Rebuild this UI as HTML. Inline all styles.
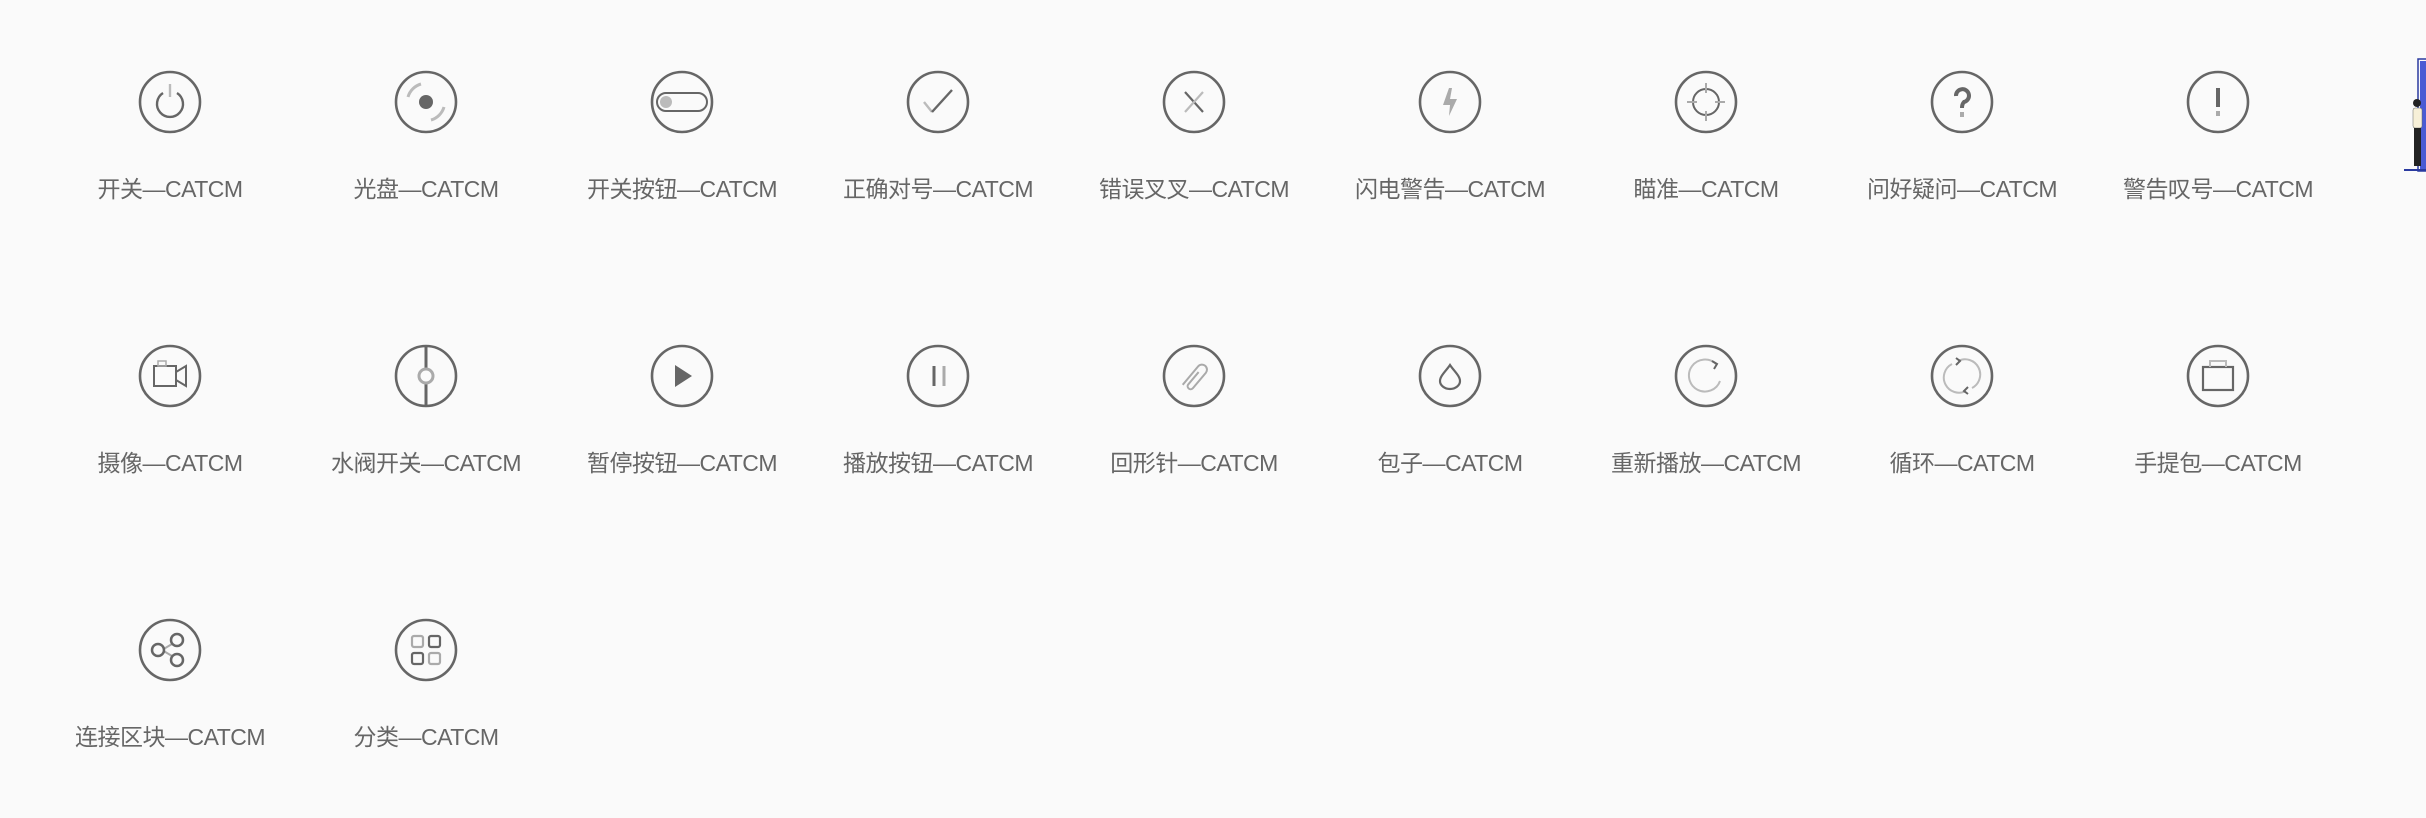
<!DOCTYPE html>
<html><head><meta charset="utf-8"><style>
html,body{margin:0;padding:0;background:#fafafa;width:2426px;height:818px;overflow:hidden;position:relative}
.i{position:absolute;width:64px;height:64px}
.t{position:absolute;width:256px;text-align:center;font-family:"Liberation Sans","Noto Sans CJK SC",sans-serif;font-size:23px;color:#666;line-height:30px;letter-spacing:-0.5px}
svg{overflow:visible}
</style></head><body>
<svg width="0" height="0" style="position:absolute"><defs><circle id="c" r="30" fill="none" stroke="#666" stroke-width="2.6"/></defs></svg>
<!-- row 1 -->
<svg class="i" style="left:138px;top:70px" viewBox="-32 -32 64 64"><use href="#c"/><path d="M-7-9A13 13 0 1 0 7-9" fill="none" stroke="#666" stroke-width="2.4"/><line x1="0" y1="-18" x2="0" y2="-5" stroke="#bbb" stroke-width="2.4"/></svg>
<div class="t" style="left:42px;top:174px">开关—CATCM</div>
<svg class="i" style="left:394px;top:70px" viewBox="-32 -32 64 64"><use href="#c"/><circle r="7" fill="#666"/><path d="M-18-5A19 19 0 0 1-5-18M18 5A19 19 0 0 1 5 18" fill="none" stroke="#bbb" stroke-width="3"/></svg>
<div class="t" style="left:298px;top:174px">光盘—CATCM</div>
<svg class="i" style="left:650px;top:70px" viewBox="-32 -32 64 64"><use href="#c"/><rect x="-25" y="-9" width="50" height="18" rx="9" fill="none" stroke="#666" stroke-width="2"/><circle cx="-16" r="6" fill="#bbb"/></svg>
<div class="t" style="left:554px;top:174px">开关按钮—CATCM</div>
<svg class="i" style="left:906px;top:70px" viewBox="-32 -32 64 64"><use href="#c"/><path d="M-14 0L-6 10" stroke="#bbb" stroke-width="2.4" fill="none"/><path d="M-6 10L14-12" stroke="#666" stroke-width="2.4" fill="none"/></svg>
<div class="t" style="left:810px;top:174px">正确对号—CATCM</div>
<svg class="i" style="left:1162px;top:70px" viewBox="-32 -32 64 64"><use href="#c"/><path d="M-9-10L9 10" stroke="#666" stroke-width="2.2"/><path d="M9-10L-9 10" stroke="#bbb" stroke-width="2.2"/></svg>
<div class="t" style="left:1066px;top:174px">错误叉叉—CATCM</div>
<svg class="i" style="left:1418px;top:70px" viewBox="-32 -32 64 64"><use href="#c"/><path d="M-1-14L-7 3H0L-1 14L7-3H0L2-14Z" fill="#aaa"/></svg>
<div class="t" style="left:1322px;top:174px">闪电警告—CATCM</div>
<svg class="i" style="left:1674px;top:70px" viewBox="-32 -32 64 64"><use href="#c"/><circle r="13" fill="none" stroke="#666" stroke-width="2"/><path d="M0-19V-9M0 9V19M-19 0H-9M9 0H19" stroke="#aaa" stroke-width="2"/></svg>
<div class="t" style="left:1578px;top:174px">瞄准—CATCM</div>
<svg class="i" style="left:1930px;top:70px" viewBox="-32 -32 64 64"><use href="#c"/><path d="M-6-6A6.5 6.5 0 1 1 2 0Q0 2 0 6" fill="none" stroke="#666" stroke-width="4"/><rect x="-2" y="10" width="4" height="5" fill="#aaa"/></svg>
<div class="t" style="left:1834px;top:174px">问好疑问—CATCM</div>
<svg class="i" style="left:2186px;top:70px" viewBox="-32 -32 64 64"><use href="#c"/><path d="M0-14V5" stroke="#666" stroke-width="4"/><rect x="-2" y="9" width="4" height="5" fill="#aaa"/></svg>
<div class="t" style="left:2090px;top:174px">警告叹号—CATCM</div>
<!-- row 2 -->
<svg class="i" style="left:138px;top:344px" viewBox="-32 -32 64 64"><use href="#c"/><rect x="-16" y="-10" width="22" height="20" fill="none" stroke="#666" stroke-width="2"/><path d="M6-4L16-10V10L6 4" fill="none" stroke="#666" stroke-width="2"/><rect x="-12" y="-15" width="8" height="5" fill="none" stroke="#aaa" stroke-width="1.5"/></svg>
<div class="t" style="left:42px;top:448px">摄像—CATCM</div>
<svg class="i" style="left:394px;top:344px" viewBox="-32 -32 64 64"><use href="#c"/><path d="M0-30V-7M0 7V30" stroke="#666" stroke-width="3"/><circle r="7" fill="none" stroke="#aaa" stroke-width="3"/></svg>
<div class="t" style="left:298px;top:448px">水阀开关—CATCM</div>
<svg class="i" style="left:650px;top:344px" viewBox="-32 -32 64 64"><use href="#c"/><path d="M-7-11L10 0L-7 11Z" fill="#666"/></svg>
<div class="t" style="left:554px;top:448px">暂停按钮—CATCM</div>
<svg class="i" style="left:906px;top:344px" viewBox="-32 -32 64 64"><use href="#c"/><path d="M-4-10V10" stroke="#666" stroke-width="3"/><path d="M6-10V10" stroke="#aaa" stroke-width="3"/></svg>
<div class="t" style="left:810px;top:448px">播放按钮—CATCM</div>
<svg class="i" style="left:1162px;top:344px" viewBox="-32 -32 64 64"><use href="#c"/><g transform="rotate(40)" fill="none" stroke="#aaa" stroke-width="2"><path d="M-3 14V-10A5 5 0 0 1 7-10V10A3 3 0 0 1 1 10V-6"/></g></svg>
<div class="t" style="left:1066px;top:448px">回形针—CATCM</div>
<svg class="i" style="left:1418px;top:344px" viewBox="-32 -32 64 64"><use href="#c"/><path d="M0-11C4-5 10 0 10 5A10 8 0 0 1-10 5C-10 0-4-5 0-11Z" fill="none" stroke="#666" stroke-width="2.2"/></svg>
<div class="t" style="left:1322px;top:448px">包子—CATCM</div>
<svg class="i" style="left:1674px;top:344px" viewBox="-32 -32 64 64"><use href="#c"/><path d="M10-12A16 16 0 1 0 14 5" fill="none" stroke="#bbb" stroke-width="2"/><path d="M6-15L11-12L8-7" fill="none" stroke="#666" stroke-width="2"/></svg>
<div class="t" style="left:1578px;top:448px">重新播放—CATCM</div>
<svg class="i" style="left:1930px;top:344px" viewBox="-32 -32 64 64"><use href="#c"/><path d="M-4-15A15 15 0 0 1 10 12M4 15A15 15 0 0 1-10-12" fill="none" stroke="#bbb" stroke-width="2"/><path d="M-6-18L-2-15L-6-11M6 18L2 15L6 11" fill="none" stroke="#666" stroke-width="2"/></svg>
<div class="t" style="left:1834px;top:448px">循环—CATCM</div>
<svg class="i" style="left:2186px;top:344px" viewBox="-32 -32 64 64"><use href="#c"/><rect x="-15" y="-9" width="30" height="23" fill="none" stroke="#666" stroke-width="2.2"/><path d="M-8-9V-15H8V-9" fill="none" stroke="#bbb" stroke-width="2"/></svg>
<div class="t" style="left:2090px;top:448px">手提包—CATCM</div>
<!-- row 3 -->
<svg class="i" style="left:138px;top:618px" viewBox="-32 -32 64 64"><use href="#c"/><path d="M-8 0L7-9M-8 0L7 9" stroke="#aaa" stroke-width="2"/><g fill="#fafafa" stroke="#666" stroke-width="2.5"><circle cx="-12" r="6"/><circle cx="7" cy="-10" r="6"/><circle cx="7" cy="10" r="6"/></g></svg>
<div class="t" style="left:42px;top:722px">连接区块—CATCM</div>
<svg class="i" style="left:394px;top:618px" viewBox="-32 -32 64 64"><use href="#c"/><g fill="none" stroke-width="2.2"><rect x="-14" y="-14" width="11" height="11" rx="2" stroke="#aaa"/><rect x="3" y="-14" width="11" height="11" rx="2" stroke="#666"/><rect x="-14" y="3" width="11" height="11" rx="2" stroke="#666"/><rect x="3" y="3" width="11" height="11" rx="2" stroke="#aaa"/></g></svg>
<div class="t" style="left:298px;top:722px">分类—CATCM</div>
<!-- right edge illustration -->
<svg style="position:absolute;left:2400px;top:55px" width="26" height="120" viewBox="0 0 26 120"><rect x="20" y="6" width="8" height="108" fill="#4a5bd4"/><rect x="18" y="4" width="10" height="112" fill="none" stroke="#2a3aa0" stroke-width="1.5"/><rect x="4" y="114" width="22" height="2" fill="#2a3aa0"/><circle cx="17" cy="48" r="4" fill="#222"/><rect x="13" y="53" width="9" height="20" rx="2" fill="#f7f0d8" stroke="#666" stroke-width=".5"/><rect x="14" y="73" width="7" height="38" fill="#222"/></svg>
</body></html>
